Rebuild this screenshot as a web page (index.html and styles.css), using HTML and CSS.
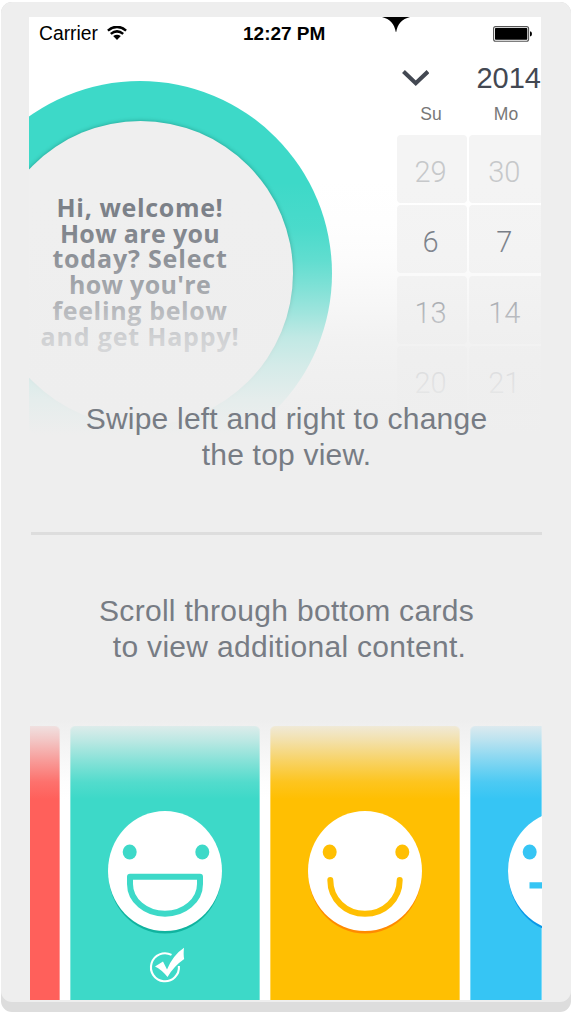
FILE: index.html
```html
<!DOCTYPE html>
<html lang="en">
<head>
<meta charset="utf-8">
<title>Welcome</title>
<link rel="stylesheet" href="styles.css">
</head>
<body>
<main class="frame">
  <div class="panel">
    <section class="top-view">
      <header class="status">
        <span class="carrier">Carrier</span>
        <svg class="wifi" width="20" height="14" viewBox="0 0 20 14" fill="none" stroke="#000" stroke-width="2.5"><path d="M.9 4.6Q10-2.9 19.1 4.6M3.8 7.9Q10 2.9 16.2 7.9"/><path d="M6.2 10.1Q10 7.2 13.8 10.1L10 14z" fill="#000" stroke="none"/></svg>
        <span class="time">12:27 PM</span>
        <svg class="battery" width="40" height="16" viewBox="0 0 40 16"><rect x=".6" y=".6" width="35" height="14.6" rx="2" fill="none" stroke="#555" stroke-width="1.1"/><rect x="2" y="2" width="32.3" height="11.8" rx=".8"/><path d="M37 5.2Q39 5.6 39 7.9T37 10.6z"/></svg>
        <svg class="spike" width="30" height="16" viewBox="0 0 30 16"><path d="M1 0H29C21 2 16.5 7 15.2 15H14.8C13.5 7 9 2 1 0z"/></svg>
      </header>
      <div class="views">
        <div class="welcome">
          <div class="ring"><div class="disc">
            <p class="greeting"><span class="wider">Hi, welcome!</span><span>How are you</span><span class="widest">today? Select</span><span>how you're</span><span class="wider">feeling below</span><span class="widest">and get Happy!</span></p>
          </div></div>
        </div>
        <div class="calendar">
          <div class="cal-head"><svg width="28" height="18" viewBox="0 0 28 18" fill="none" stroke="#434852" stroke-width="4.2"><path d="M1.5 2.5L14 14.3L26.5 2.5"/></svg><span>2014</span></div>
          <div class="weekdays"><span>Su</span><span>Mo</span></div>
          <div class="days">
            <span class="out">29</span><span class="out">30</span>
            <span>6</span><span>7</span>
            <span>13</span><span>14</span>
            <span>20</span><span>21</span>
          </div>
        </div>
      </div>
      <div class="fade-down"></div>
    </section>
    <p class="hint hint-top">Swipe left and right to change<br>the top view.</p>
    <hr class="divider">
    <p class="hint hint-bottom">Scroll through bottom cards<br><span class="second">to view additional content.</span></p>
    <section class="cards">
      <div class="card red"></div>
      <div class="card teal">
        <svg width="190" height="274" viewBox="0 0 190 274">
          <ellipse cx="95" cy="147.5" rx="56.5" ry="60" fill="#10b39f"/><ellipse cx="95" cy="145" rx="57" ry="60" fill="#fff"/>
          <g fill="currentColor"><ellipse cx="59.7" cy="126" rx="7" ry="7.4"/><ellipse cx="132.3" cy="126" rx="7" ry="7.4"/></g>
          <path d="M60 150.7H130V158C130 174.5 114.3 187.8 95 187.8S60 174.5 60 158z" fill="none" stroke="currentColor" stroke-width="6" stroke-linejoin="round"/>
          <path d="M101.5 228.9A14 14 0 1 0 108.9 240" fill="none" stroke="#fff" stroke-width="2.1"/>
          <path d="M85 240.5L93 235.5L97 243.5Q103 229 114 221.7Q113.2 229 114.2 233Q104 240 97.5 251Q91.5 243.5 85 240.5z" fill="#fff"/>
        </svg>
      </div>
      <div class="card yellow">
        <svg width="190" height="274" viewBox="0 0 190 274">
          <ellipse cx="95" cy="147.5" rx="56.5" ry="60" fill="#ff8a00"/><ellipse cx="95" cy="145" rx="57" ry="60" fill="#fff"/>
          <g fill="currentColor"><ellipse cx="59.7" cy="126" rx="7" ry="7.4"/><ellipse cx="132.3" cy="126" rx="7" ry="7.4"/></g>
          <path d="M60.3 154C60.3 173.5 75.9 187.8 95 187.8S129.7 173.5 129.7 154" fill="none" stroke="currentColor" stroke-width="6" stroke-linecap="round"/>
        </svg>
      </div>
      <div class="card blue">
        <svg width="190" height="274" viewBox="0 0 190 274">
          <ellipse cx="95" cy="147.5" rx="56.5" ry="60" fill="#0898e8"/><ellipse cx="95" cy="145" rx="57" ry="60" fill="#fff"/>
          <g fill="currentColor"><ellipse cx="59.7" cy="126" rx="7" ry="7.4"/><ellipse cx="132.3" cy="126" rx="7" ry="7.4"/><path d="M59.5 156.2h71v6.4h-71z"/></g>
        </svg>
      </div>
      <div class="fade-up"></div>
    </section>
  </div>
</main>
</body>
</html>
```

FILE: styles.css
```css
* { box-sizing: border-box; }
body { margin: 0; background: #fff; font-family: "Liberation Sans", Arial, sans-serif; }
p { margin: 0; }
svg { display: block; }
.frame { width: 570px; height: 1010px; margin: 2px 0 0 1px; background: #ddd; border-radius: 11px; overflow: hidden; }
.panel { height: 1000px; padding: 15px 0 0 28px; background: #eee; border-radius: 11px; }

.top-view { position: relative; width: 512px; height: 418px; overflow: hidden; background: #fff; }
.fade-down { position: absolute; left: 0; right: 0; top: 0; bottom: 0; background: linear-gradient(to bottom, rgba(238,238,238,0) 165px, rgba(238,238,238,.07) 210px, rgba(238,238,238,.2) 243px, rgba(238,238,238,.37) 269px, rgba(238,238,238,.55) 295px, rgba(238,238,238,.74) 320px, rgba(238,238,238,.86) 350px, rgba(238,238,238,.95) 383px, #eee 418px); }

.status { position: relative; display: flex; align-items: center; height: 33px; padding-left: 10px; font-size: 19.3px; color: #000; }
.carrier { width: 68px; }
.wifi { margin-top: -2px; }
.time { margin-left: 116px; width: 250px; font-size: 19px; font-weight: 700; }
.battery { width: 40px; flex: none; }
.spike { position: absolute; left: 352px; top: 0; }

.views { display: grid; grid-template-columns: 368px 144px; height: 385px; }
.welcome { overflow: hidden; padding-top: 31px; }
.ring { display: flex; align-items: center; justify-content: center; width: 384px; height: 385px; margin-left: -81px; border-radius: 50%; background: #3dd9c8; }
.disc { width: 305px; height: 305px; padding-top: 74px; border-radius: 50%; background: #efefef; box-shadow: 0 0 4px rgba(0,70,60,.4); }
.greeting { display: flex; flex-direction: column; align-items: center; font: 700 25px/25.7px "Open Sans", sans-serif; letter-spacing: .35px; color: #777c84; white-space: nowrap; }
.greeting .wider { letter-spacing: .65px; }
.greeting .widest { letter-spacing: .82px; }

.cal-head { display: flex; align-items: center; height: 50px; padding: 0 0 0 5px; font-size: 29px; color: #434852; margin-top: 3px; }
.cal-head span { margin-left: 47px; }
.weekdays { display: grid; grid-template-columns: 70px 74px; column-gap: 2px; height: 32px; padding-top: 2px; font-size: 17.5px; line-height: 19px; text-align: center; color: #777; }
.weekdays span:first-child { padding-right: 2px; }
.days { display: grid; grid-template-columns: 70px 74px; grid-auto-rows: 68px; gap: 2.3px; font: 300 29px/74px Roboto, sans-serif; text-align: center; color: #6d737d; }
.days span { height: 68px; background: #f4f4f4; border-radius: 4px; }
.days span:nth-child(odd) { padding-right: 3px; }
.days span:nth-child(even) { padding-right: 4px; }
.days .out { color: #c6c8ca; }

.hint { width: 512px; text-align: center; font-size: 30px; line-height: 36px; color: #777c84; position: relative; }
.hint-top { margin-top: -34px; padding-left: 3px; letter-spacing: .21px; }
.divider { width: 511px; height: 3px; margin: 59px 0 0 2px; border: 0; background: #ddd; }
.hint-bottom { margin-top: 58px; padding-left: 3px; letter-spacing: .3px; }
.second { padding-left: 6px; }

.cards { position: relative; display: grid; grid-template-columns: 30px 190px 190px 72px; column-gap: 10px; width: 512px; height: 280px; margin: 55px 0 0 1px; padding-top: 6px; overflow: hidden; background: #fff; }
.card { overflow: hidden; border-radius: 5px 5px 0 0; box-shadow: inset 1px 0 rgba(255,255,255,.35), inset -1px 0 rgba(255,255,255,.35); }
.red { background: #ff605b; border-radius: 0 5px 0 0; box-shadow: inset -1px 0 rgba(255,255,255,.35); }
.teal { background: #3dd9c8; color: #3dd9c8; }
.yellow { background: #ffbf02; color: #ffbf02; }
.blue { background: #36c5f4; color: #36c5f4; border-radius: 5px 0 0 0; }
.fade-up { position: absolute; left: 0; right: 0; top: 0; height: 80px; background: linear-gradient(to bottom, #eee 0, rgba(238,238,238,.89) 7px, rgba(238,238,238,.72) 20px, rgba(238,238,238,.4) 42px, rgba(238,238,238,.12) 62px, rgba(238,238,238,0) 79px); }
```
